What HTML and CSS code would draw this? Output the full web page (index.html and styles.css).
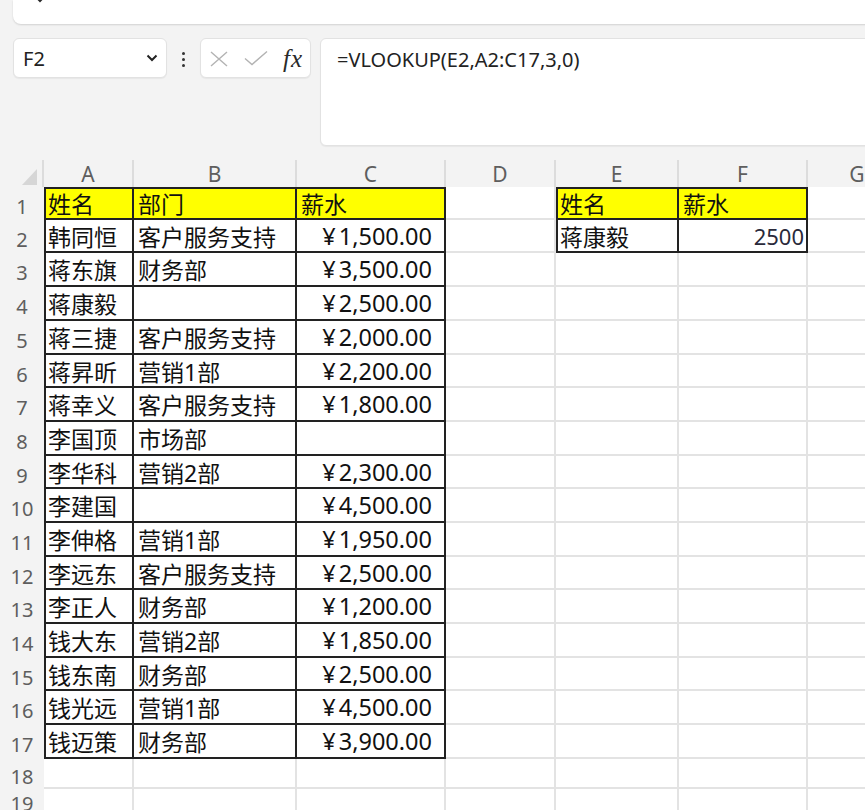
FILE: index.html
```html
<!DOCTYPE html>
<html lang="zh-CN">
<head>
<meta charset="utf-8">
<title>VLOOKUP</title>
<link rel="stylesheet" href="styles.css">
</head>
<body>
<div class="ribbon">
  <svg class="rchev" width="12" height="8" viewBox="0 0 12 8"><polyline points="1.5,1.5 6,6 10.5,1.5" fill="none" stroke="#2b2b2b" stroke-width="2"/></svg>
</div>
<div class="fbar">
  <div class="namebox"><span>F2</span><svg width="12" height="8" viewBox="0 0 12 8"><polyline points="1.5,1.5 6,6 10.5,1.5" fill="none" stroke="#222" stroke-width="2"/></svg></div>
  <div class="dots"><i></i><i></i><i></i></div>
  <div class="fxbox">
    <svg class="ico-x" width="18" height="16" viewBox="0 0 18 16"><path d="M1 1 L17 15 M17 1 L1 15" stroke="#b3b3b3" stroke-width="1.4" fill="none"/></svg>
    <svg class="ico-ok" width="24" height="16" viewBox="0 0 24 16"><polyline points="1,8.5 8,14.5 23,1.5" fill="none" stroke="#b3b3b3" stroke-width="1.4"/></svg>
    <span class="fx">fx</span>
  </div>
  <div class="formula">=VLOOKUP(E2,A2:C17,3,0)</div>
</div>
<div class="sheet">
  <div class="corner"><i class="tri"></i></div><div class="hd">A</div><div class="hd">B</div><div class="hd">C</div><div class="hd">D</div><div class="hd">E</div><div class="hd">F</div><div class="hd">G</div>

  <div class="rh">1</div><div class="c bx bl bt y">姓名</div><div class="c bx bt y">部门</div><div class="c bx bt y">薪水</div><div class="c"></div><div class="c bx bl bt y">姓名</div><div class="c bx bt y">薪水</div><div class="c"></div>
  <div class="rh">2</div><div class="c bx bl">韩同恒</div><div class="c bx">客户服务支持</div><div class="c bx num"><span class="yen">¥</span>1,500.00</div><div class="c"></div><div class="c bx bl">蒋康毅</div><div class="c bx val">2500</div><div class="c"></div>
  <div class="rh">3</div><div class="c bx bl">蒋东旗</div><div class="c bx">财务部</div><div class="c bx num"><span class="yen">¥</span>3,500.00</div><div class="c"></div><div class="c"></div><div class="c"></div><div class="c"></div>
  <div class="rh">4</div><div class="c bx bl">蒋康毅</div><div class="c bx"></div><div class="c bx num"><span class="yen">¥</span>2,500.00</div><div class="c"></div><div class="c"></div><div class="c"></div><div class="c"></div>
  <div class="rh">5</div><div class="c bx bl">蒋三捷</div><div class="c bx">客户服务支持</div><div class="c bx num"><span class="yen">¥</span>2,000.00</div><div class="c"></div><div class="c"></div><div class="c"></div><div class="c"></div>
  <div class="rh">6</div><div class="c bx bl">蒋昇昕</div><div class="c bx">营销1部</div><div class="c bx num"><span class="yen">¥</span>2,200.00</div><div class="c"></div><div class="c"></div><div class="c"></div><div class="c"></div>
  <div class="rh">7</div><div class="c bx bl">蒋幸义</div><div class="c bx">客户服务支持</div><div class="c bx num"><span class="yen">¥</span>1,800.00</div><div class="c"></div><div class="c"></div><div class="c"></div><div class="c"></div>
  <div class="rh">8</div><div class="c bx bl">李国顶</div><div class="c bx">市场部</div><div class="c bx num"></div><div class="c"></div><div class="c"></div><div class="c"></div><div class="c"></div>
  <div class="rh">9</div><div class="c bx bl">李华科</div><div class="c bx">营销2部</div><div class="c bx num"><span class="yen">¥</span>2,300.00</div><div class="c"></div><div class="c"></div><div class="c"></div><div class="c"></div>
  <div class="rh">10</div><div class="c bx bl">李建国</div><div class="c bx"></div><div class="c bx num"><span class="yen">¥</span>4,500.00</div><div class="c"></div><div class="c"></div><div class="c"></div><div class="c"></div>
  <div class="rh">11</div><div class="c bx bl">李伸格</div><div class="c bx">营销1部</div><div class="c bx num"><span class="yen">¥</span>1,950.00</div><div class="c"></div><div class="c"></div><div class="c"></div><div class="c"></div>
  <div class="rh">12</div><div class="c bx bl">李远东</div><div class="c bx">客户服务支持</div><div class="c bx num"><span class="yen">¥</span>2,500.00</div><div class="c"></div><div class="c"></div><div class="c"></div><div class="c"></div>
  <div class="rh">13</div><div class="c bx bl">李正人</div><div class="c bx">财务部</div><div class="c bx num"><span class="yen">¥</span>1,200.00</div><div class="c"></div><div class="c"></div><div class="c"></div><div class="c"></div>
  <div class="rh">14</div><div class="c bx bl">钱大东</div><div class="c bx">营销2部</div><div class="c bx num"><span class="yen">¥</span>1,850.00</div><div class="c"></div><div class="c"></div><div class="c"></div><div class="c"></div>
  <div class="rh">15</div><div class="c bx bl">钱东南</div><div class="c bx">财务部</div><div class="c bx num"><span class="yen">¥</span>2,500.00</div><div class="c"></div><div class="c"></div><div class="c"></div><div class="c"></div>
  <div class="rh">16</div><div class="c bx bl">钱光远</div><div class="c bx">营销1部</div><div class="c bx num"><span class="yen">¥</span>4,500.00</div><div class="c"></div><div class="c"></div><div class="c"></div><div class="c"></div>
  <div class="rh">17</div><div class="c bx bl">钱迈策</div><div class="c bx">财务部</div><div class="c bx num"><span class="yen">¥</span>3,900.00</div><div class="c"></div><div class="c"></div><div class="c"></div><div class="c"></div>
  <div class="rh">18</div><div class="c"></div><div class="c"></div><div class="c"></div><div class="c"></div><div class="c"></div><div class="c"></div><div class="c"></div>
  <div class="rh rh-cut">19</div><div class="c"></div><div class="c"></div><div class="c"></div><div class="c"></div><div class="c"></div><div class="c"></div><div class="c"></div>
</div>
</body>
</html>
```
FILE: styles.css
```css
* { box-sizing: border-box; }
html, body { margin: 0; padding: 0; }
body {
  width: 865px;
  height: 810px;
  overflow: hidden;
  background: #f3f3f3;
  font-family: "Noto Sans", "Noto Sans CJK SC", sans-serif;
  color: #1a1a1a;
}

/* top ribbon strip */
.ribbon {
  display: flex;
  align-items: flex-start;
  margin-left: 13px;
  margin-right: -20px;
  height: 24px;
  background: #fff;
  border-radius: 0 0 0 8px;
  box-shadow: 0 1px 2px rgba(0,0,0,0.14);
}
.rchev { display: block; margin-left: 21px; margin-top: -5px; }

/* formula bar */
.fbar {
  display: flex;
  align-items: flex-start;
  margin-top: 14px;
  padding-left: 13px;
}
.namebox {
  width: 154px;
  height: 40px;
  background: #fff;
  border: 1px solid #e2e2e2;
  border-radius: 6px;
  box-shadow: 0 1px 1px rgba(0,0,0,0.05);
  display: flex;
  align-items: center;
  justify-content: space-between;
  padding: 0 8px 0 9px;
  font-size: 20px;
  color: #222;
}
.namebox svg { display: block; }
.dots {
  width: 3px;
  margin: 14px 15px 0 15px;
  display: flex;
  flex-direction: column;
  gap: 3px;
}
.dots i { display: block; width: 3px; height: 3px; border-radius: 50%; background: #333; }
.fxbox {
  width: 111px;
  height: 40px;
  background: #fff;
  border: 1px solid #e2e2e2;
  border-radius: 6px;
  box-shadow: 0 1px 1px rgba(0,0,0,0.05);
  display: flex;
  align-items: center;
  padding-left: 9px;
}
.fxbox svg { display: block; }
.ico-x { margin-top: 2px; }
.ico-ok { margin-left: 16px; margin-top: -1px; }
.fx {
  margin-left: 15px;
  font-family: "Liberation Serif", "DejaVu Serif", serif;
  font-style: italic;
  font-size: 25px;
  letter-spacing: 1px;
  color: #2a2a2a;
  line-height: 1;
}
.formula {
  flex: 1;
  margin-left: 9px;
  margin-right: -20px;
  height: 108px;
  background: #fff;
  border: 1px solid #e2e2e2;
  border-radius: 6px;
  box-shadow: 0 1px 1px rgba(0,0,0,0.05);
  padding: 7px 16px;
  font-size: 20px;
  color: #222;
}

/* sheet grid */
.sheet {
  margin-top: 14px;
  display: grid;
  grid-template-columns: 44px 90px 163px 149px 110px 123px 129px 100px;
  grid-template-rows: 27px 33px 33px 34px 34px 34px 33px 34px 34px 33px 34px 34px 33px 34px 34px 33px 34px 34px 30px 30px;
}
.corner {
  background: #f3f3f3;
  border-right: 2px solid #dcdcdc;
  display: flex;
  align-items: flex-end;
  justify-content: flex-end;
  padding: 0 5px 2px 0;
}
.tri {
  display: block;
  width: 15px;
  height: 16px;
  background: #d6d6d6;
  clip-path: polygon(100% 0, 100% 100%, 0 100%);
}
.hd {
  background: #f3f3f3;
  border-right: 2px solid #dcdcdc;
  display: flex;
  align-items: center;
  justify-content: center;
  font-size: 21px;
  color: #5e5e5e;
  padding-top: 1px;
}
.rh {
  background: #f3f3f3;
  display: flex;
  align-items: center;
  justify-content: center;
  padding-top: 5px;
  font-size: 20px;
  color: #5e5e5e;
}
.rh-cut { align-items: flex-start; padding-top: 1px; }
.c {
  background: #fff;
  border-right: 2px solid #e3e3e3;
  border-bottom: 2px solid #e3e3e3;
  display: flex;
  align-items: center;
  padding-left: 4px;
  font-size: 23px;
  white-space: nowrap;
  overflow: hidden;
  color: #111;
}
.num { justify-content: flex-end; padding-right: 12px; font-size: 23.5px; }
.yen { margin-right: 3px; }
.val { justify-content: flex-end; padding-right: 2px; font-size: 22px; color: #2a2a3a; }
.y { background: #ffff00; }
.bx { border-right-color: #222; border-bottom-color: #222; }
.bl { box-shadow: inset 2px 0 0 #222; }
.bt { box-shadow: inset 0 2px 0 #222; }
.bl.bt { box-shadow: inset 2px 2px 0 #222; }
```
